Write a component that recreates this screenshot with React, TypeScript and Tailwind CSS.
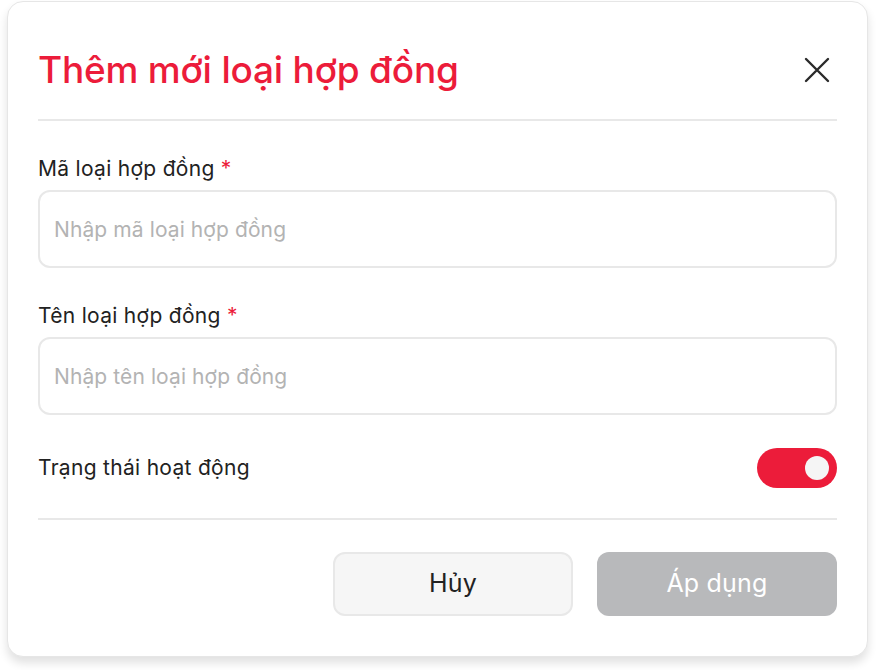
import { useState } from "react";

export default function App() {
    const [active, setActive] = useState(true);

    return (
        <div className="min-h-[670px] w-[876px] bg-white pl-[7px] pt-[1px]" style={{ fontFamily: "Inter, 'Noto Sans', sans-serif" }}>
            <div className="w-[861px] h-[656px] rounded-[16px] bg-white border border-[#e6e6e6] shadow-[0_6px_10px_rgba(0,0,0,0.12)] px-[30px] pt-[44px] box-border">
                <div className="flex items-center justify-between">
                    <h3 className="text-[37px] font-medium leading-[48px] tracking-[-0.2px] text-[#ec1c3a]">Thêm mới loại hợp đồng</h3>
                    <button className="w-[32px] h-[32px] flex items-center justify-center mr-[4px]">
                        <svg width="28" height="28" viewBox="0 0 28 28" fill="none" stroke="#2a2a2a" strokeWidth="2.4" strokeLinecap="round">
                            <path d="M3 3L25 25M25 3L3 25" />
                        </svg>
                    </button>
                </div>
                <div className="mt-[25px] h-[2px] bg-[#e8e8e8]" />

                <div className="mt-[34px]">
                    <label className="block text-[21px] leading-[28px] tracking-[0.3px] text-[#222]">
                        Mã loại hợp đồng <span className="text-[#ec1c3a]">*</span>
                    </label>
                    <input
                        placeholder="Nhập mã loại hợp đồng"
                        className="mt-[7px] block w-full h-[78px] rounded-[12px] border-2 border-[#e8e8e8] px-[14px] text-[21px] tracking-[0.1px] text-[#222] placeholder:text-[#b3b3b3] outline-none"
                    />
                </div>

                <div className="mt-[34px]">
                    <label className="block text-[21px] leading-[28px] tracking-[0.3px] text-[#222]">
                        Tên loại hợp đồng <span className="text-[#ec1c3a]">*</span>
                    </label>
                    <input
                        placeholder="Nhập tên loại hợp đồng"
                        className="mt-[7px] block w-full h-[78px] rounded-[12px] border-2 border-[#e8e8e8] px-[14px] text-[21px] tracking-[0.1px] text-[#222] placeholder:text-[#b3b3b3] outline-none"
                    />
                </div>

                <div className="mt-[33px] flex items-center justify-between">
                    <span className="text-[21px] leading-[28px] tracking-[0.3px] text-[#222]">Trạng thái hoạt động</span>
                    <button
                        onClick={() => setActive(!active)}
                        className={active ? "w-[80px] h-[40px] rounded-full bg-[#ec1c3a] flex items-center justify-end pr-[8px]" : "w-[80px] h-[40px] rounded-full bg-[#d4d4d4] flex items-center justify-start pl-[8px]"}
                    >
                        <span className="w-[24px] h-[24px] rounded-full bg-[#f5f5f5]" />
                    </button>
                </div>
                <div className="mt-[30px] h-[2px] bg-[#e8e8e8]" />

                <div className="mt-[32px] flex justify-end gap-[24px]">
                    <button className="w-[240px] h-[64px] rounded-[12px] bg-[#f6f6f6] border-2 border-[#e8e8e8] text-[25px] tracking-[0.2px] text-[#222]">Hủy</button>
                    <button className="w-[240px] h-[64px] rounded-[12px] bg-[#b8b9bb] text-[25px] tracking-[0.2px] text-white">Áp dụng</button>
                </div>
            </div>
        </div>
    );
}
